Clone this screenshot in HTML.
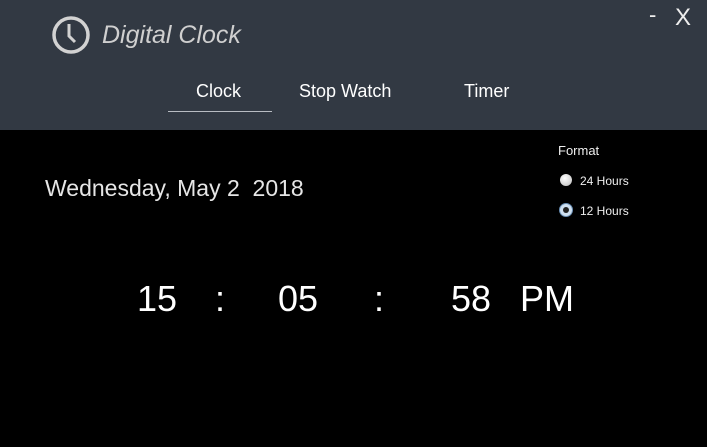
<!DOCTYPE html><html><head><style>
body{margin:0;width:707px;height:447px;background:#000;overflow:hidden;font-family:"Liberation Sans",sans-serif;position:relative}
.hd{position:absolute;left:0;top:0;width:707px;height:130px;background:#323943}
.a{position:absolute;white-space:nowrap}
</style></head><body>
<div class="hd"></div>
<svg class="a" style="left:51px;top:15px" width="40" height="40"><circle cx="20" cy="20" r="17" fill="none" stroke="#d2d2d2" stroke-width="3.5"/><path d="M18 9 V21 L24 27" fill="none" stroke="#d2d2d2" stroke-width="3"/></svg>
<div class="a" style="left:102px;top:21px;font-size:25px;font-style:italic;color:#cfcfcf">Digital Clock</div>
<div class="a" style="left:649px;top:2px;font-size:22px;color:#eee">-</div>
<div class="a" style="left:675px;top:4px;font-size:24px;color:#eee">X</div>
<div class="a" style="left:196px;top:81px;font-size:18px;color:#fff">Clock</div>
<div class="a" style="left:299px;top:81px;font-size:18px;color:#fff">Stop Watch</div>
<div class="a" style="left:464px;top:81px;font-size:18px;color:#fff">Timer</div>
<div class="a" style="left:168px;top:111px;width:104px;height:1px;background:#b8bcc2"></div>
<div class="a" style="left:558px;top:143px;font-size:13px;color:#eee">Format</div>
<div class="a" style="left:560px;top:174px;width:12px;height:12px;border-radius:50%;background:radial-gradient(circle at 40% 35%,#fff,#bbb)"></div>
<div class="a" style="left:580px;top:174px;font-size:12px;color:#eee">24 Hours</div>
<div class="a" style="left:559px;top:203px;width:12px;height:12px;border-radius:50%;background:#cfe0f0;border:1px solid #6a8fb5"></div>
<div class="a" style="left:563px;top:207px;width:6px;height:6px;border-radius:50%;background:#222"></div>
<div class="a" style="left:580px;top:204px;font-size:12px;color:#eee">12 Hours</div>
<div class="a" style="left:45px;top:175px;font-size:23px;color:#e6e6e6">Wednesday, May 2&nbsp; 2018</div>
<div style="font-size:36px;color:#fff">
<div class="a" style="left:137px;top:278px">15</div>
<div class="a" style="left:215px;top:278px">:</div>
<div class="a" style="left:278px;top:278px">05</div>
<div class="a" style="left:374px;top:278px">:</div>
<div class="a" style="left:451px;top:278px">58</div>
<div class="a" style="left:520px;top:278px">PM</div>
</div>
</body></html>
